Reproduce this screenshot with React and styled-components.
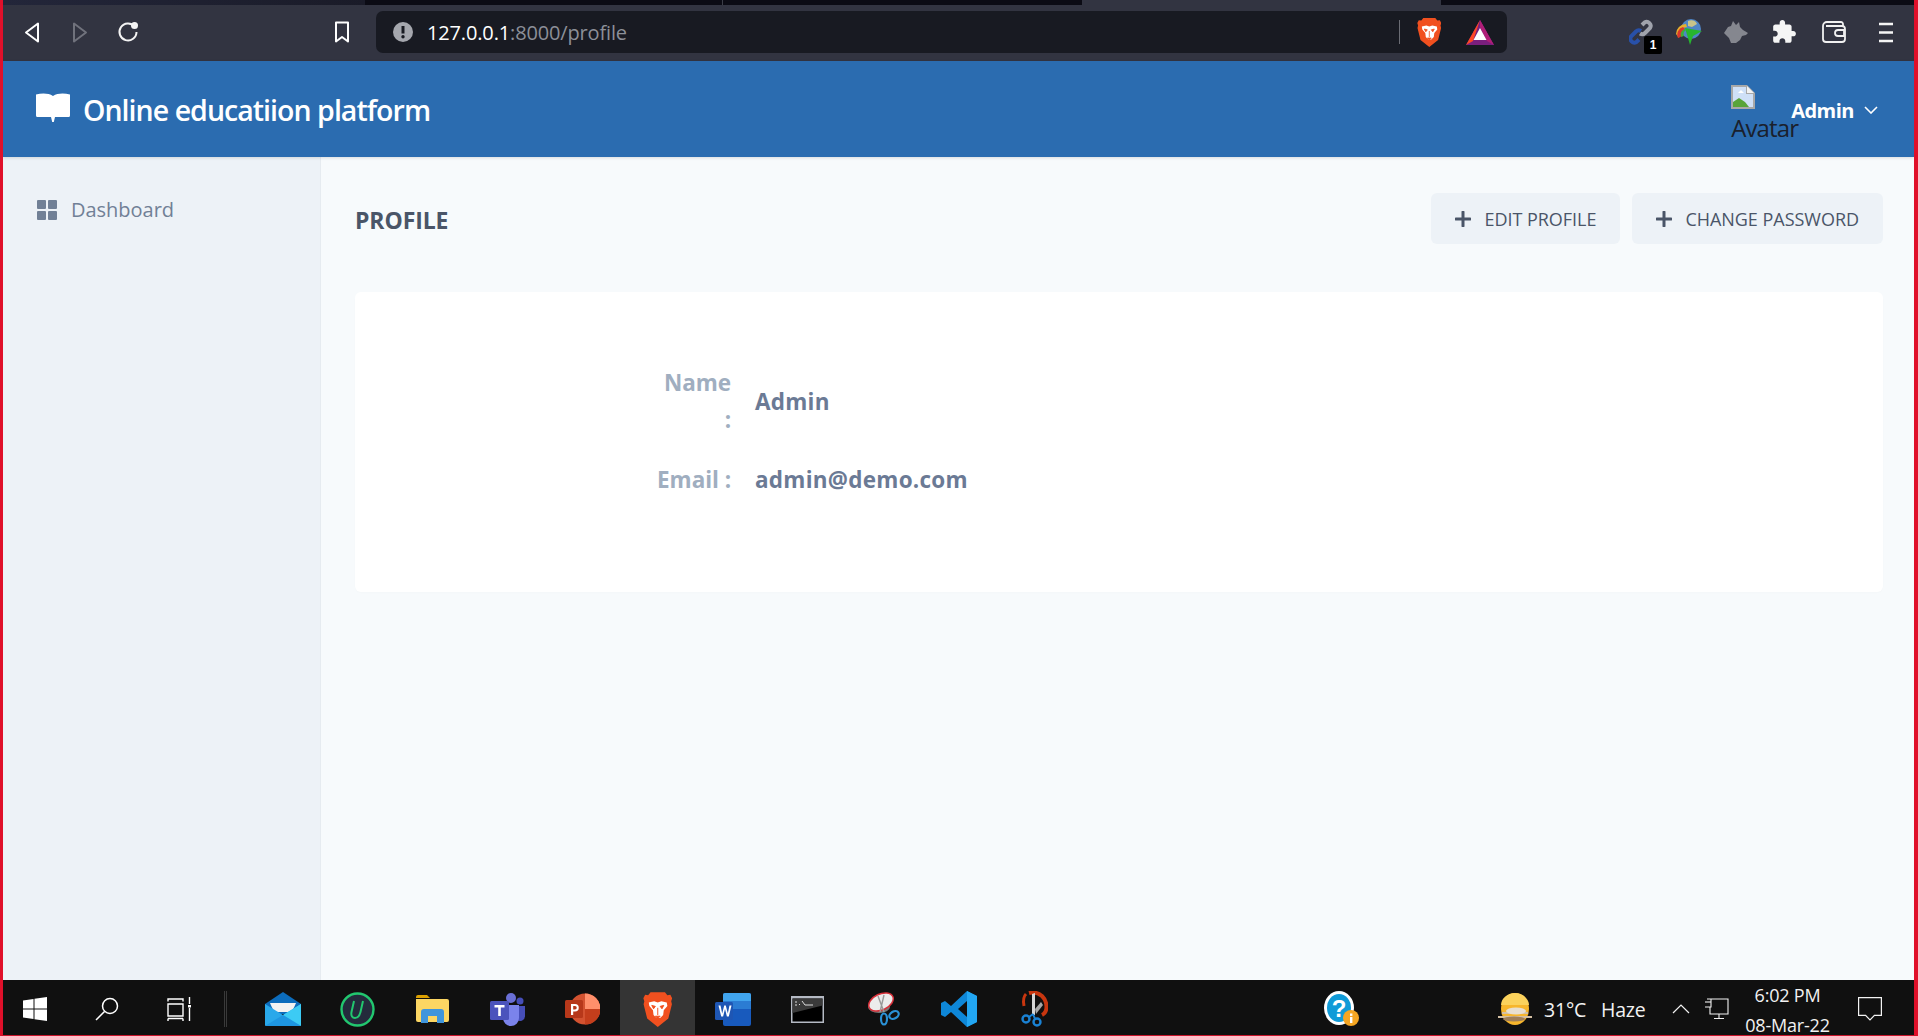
import React from "react";
import styled, { createGlobalStyle } from "styled-components";

const Global = createGlobalStyle`
  html, body { margin: 0; padding: 0; height: 100%; overflow: hidden; }
  * { box-sizing: border-box; }
  #root { height: 1036px; }
`;

const sans = `"Open Sans", "Noto Sans", sans-serif`;

const Frame = styled.div`
  height: 1036px; display: flex; flex-direction: column;
  border-left: 3px solid #e0102a; border-right: 4px solid #e0102a; border-bottom: 1px solid #c8142a;
  font-family: ${sans}; background: #f7fafc; overflow: hidden;
`;
const TabStrip = styled.div`height: 5px; display: flex; flex: none; background: #0b0b14;`;
const Tab = styled.div`
  width: ${p => p.$w}px; height: 5px; flex: none;
  background: ${p => p.$bg};
  border-right: ${p => (p.$edge ? "1px solid #3c3e48" : "none")};
`;
const Toolbar = styled.div`
  height: 56px; flex: none; background: #323441; display: flex; align-items: center; padding: 0 4px 2px 5px;
`;
const ToolSlot = styled.div`
  width: ${p => p.$w || 48}px; margin-left: ${p => p.$ml || 0}px; flex: none; height: 42px;
  display: flex; align-items: center; justify-content: center; position: relative;
`;
const AddressBar = styled.div`
  width: 1131px; height: 42px; margin-left: 10px; background: #181a22; border-radius: 7px; flex: none;
  display: flex; align-items: center; padding-left: 17px;
`;
const Url = styled.div`
  margin-left: 14px; font-size: 20px; letter-spacing: -0.15px; color: #8c8f98; white-space: nowrap; width: 972px;
  b { color: #fff; font-weight: 400; }
`;
const UrlDivider = styled.div`width: 1px; height: 24px; background: #6a6c74; flex: none;`;
const ShieldSlot = styled.div`width: ${p => p.$w}px; flex: none; display: flex; justify-content: center;`;
const ExtSpacer = styled.div`flex: 1;`;
const Badge = styled.span`
  position: absolute; left: 27px; top: 25px; width: 18px; height: 18px; background: #000; color: #fff; border-radius: 2px;
  font: 700 12px/18px "Liberation Sans", sans-serif; text-align: center;
`;

const Header = styled.header`
  height: 96px; flex: none; background: #2b6cb0; display: flex; align-items: center; padding: 0 36px 0 33px;
  box-shadow: 0 1px 3px rgba(0,0,0,.12); position: relative; z-index: 1;
`;
const Brand = styled.div`
  display: flex; align-items: center; gap: 13px; color: #fff; font-size: 28.5px; font-weight: 600; letter-spacing: -.96px;
  padding-top: 2px;
`;
const BookIcon = styled.svg`margin-top: -4px;`;
const UserArea = styled.div`margin-left: auto; display: flex; align-items: flex-start; height: 96px;`;
const Avatar = styled.div`
  width: 60px; padding-top: 24px; font-size: 24px; line-height: 38px; color: #1a202c; font-weight: 400; letter-spacing: -.85px;
  white-space: nowrap;
  svg { display: block; }
`;
const UserName = styled.div`
  display: flex; align-items: center; gap: 10px; height: 96px; padding-top: 2px; color: #fff; font-size: 20px; font-weight: 700; letter-spacing: -.5px;
`;

const Body = styled.div`flex: 1; display: flex; min-height: 0;`;
const Sidebar = styled.aside`
  width: 318px; flex: none; background: #edf2f7; border-right: 1px solid #e6ebf0; padding: 40px 0 0 34px;
`;
const NavItem = styled.div`
  display: flex; align-items: center; gap: 14px; color: #718096; font-size: 20px; line-height: 26px; letter-spacing: -.02px; font-weight: 500;
`;
const Main = styled.main`flex: 1; padding: 36px 31px 0 34px; min-width: 0;`;
const PageHead = styled.div`display: flex; align-items: center; justify-content: space-between; height: 51px;`;
const PageTitle = styled.h1`
  margin: 3px 0 0 0; font-size: 23px; font-weight: 700; color: #4a5568; letter-spacing: -.1px; text-transform: uppercase;
`;
const Actions = styled.div`display: flex; gap: 12px;`;
const ActionButton = styled.button`
  height: 51px; padding: 0 24px; background: #edf2f7; border: 0; border-radius: 6px;
  display: flex; align-items: center; gap: 13px; color: #4a5568;
  font-family: ${sans}; font-size: 18px; font-weight: 500; letter-spacing: -.03px; text-transform: uppercase;
`;
const Card = styled.section`
  margin-top: 48px; height: 300px; background: #fff; border-radius: 6px; padding-top: 72px;
  box-shadow: 0 1px 2px rgba(0,0,0,.015);
`;
const InfoRow = styled.div`
  display: grid; grid-template-columns: 376px 1fr; column-gap: 24px; align-items: center; margin-bottom: 23px;
`;
const InfoLabel = styled.div`
  text-align: right; color: #a0aec0; font-size: 22.5px; font-weight: 700; line-height: 37px; letter-spacing: -.05px;
`;
const InfoValue = styled.div`
  color: #6b7a95; font-size: 22.5px; font-weight: 700; line-height: 37px; letter-spacing: .25px;
`;

const Taskbar = styled.footer`
  height: 55px; flex: none; background: #101010; display: flex; align-items: center; color: #f2f2f2;
`;
const TaskSlot = styled.div`
  width: ${p => p.$w || 75}px; margin-left: ${p => p.$ml || 0}px; height: 55px; flex: none; padding-top: 3px;
  display: flex; align-items: center; justify-content: center;
  background: ${p => (p.$active ? "#343434" : "transparent")};
`;
const TaskDivider = styled.div`
  width: 3px; height: 36px; flex: none; margin: 3px 0 0 10px; border-left: 1px solid #3a3a3a; border-right: 1px solid #3a3a3a;
`;
const Weather = styled.div`
  margin: 3px 0 0 131px; display: flex; align-items: center; font-size: 19.5px; letter-spacing: -.2px; white-space: nowrap; flex: none;
`;
const WeatherText = styled.span`margin-left: 12px; word-spacing: 10px;`;
const Clock = styled.div`
  width: 104px; flex: none; margin: 5px 0 0 6px; text-align: center; font-size: 18px; line-height: 30px; letter-spacing: -.2px;
`;

/* ---- drawings ---- */
const BraveLion = ({ size = 30 }) => (
  <svg width={size * 0.82} height={size} viewBox="0 0 24 30">
    <path d="M6 1h12l2 2.500 2.500-.3L24 6l-.8 2.500.6 2.500-3 12L12 30 3.200 23 .2 11 .8 8.500 0 6l1.500-2.800L4 3.500z" fill="#f1501f" />
    <path d="M4.500 9.500 9 8.500l3 1 3-1 4.500 1 .5 3-3 3.500-.5 4-2.500 2.500h-3L8.500 20 8 16l-3-3.500z" fill="#fff" />
    <path d="M7 12l3 .8-1.500 2zM17 12l-3 .8 1.500 2zM12 14v6M10 21h4l-2 2z" fill="#f1501f" stroke="#f1501f" strokeWidth=".8" />
  </svg>
);
const Chevron = ({ w = 14, h = 8, color = "#fff", sw = 1.6, up = false }) => (
  <svg width={w} height={h} viewBox={`0 0 ${w} ${h}`}>
    <path d={up ? `M1 ${h - 1}L${w / 2} 1L${w - 1} ${h - 1}` : `M1 1L${w / 2} ${h - 1}L${w - 1} 1`} fill="none" stroke={color} strokeWidth={sw} />
  </svg>
);
const Plus = () => (
  <svg width="16" height="16" viewBox="0 0 16 16"><path d="M8 1v14M1 8h14" stroke="#4a5568" strokeWidth="3" strokeLinecap="round" /></svg>
);

export default function App() {
  return (
    <Frame>
      <Global />
      <TabStrip>
        <Tab $w={362} $bg="linear-gradient(90deg,#23263a,#1a1b28)" />
        <Tab $w={358} $bg="#0b0b14" $edge />
        <Tab $w={359} $bg="#0b0b14" />
        <Tab $w={359} $bg="#323441" />
      </TabStrip>
      <Toolbar>
        <ToolSlot>
          <svg width="16" height="21" viewBox="0 0 16 21"><path d="M14 1.500v18L2 10.500z" fill="none" stroke="#fff" strokeWidth="2" strokeLinejoin="round" /></svg>
        </ToolSlot>
        <ToolSlot>
          <svg width="16" height="21" viewBox="0 0 16 21"><path d="M2 1.500v18l12-9z" fill="none" stroke="#70727c" strokeWidth="2" strokeLinejoin="round" /></svg>
        </ToolSlot>
        <ToolSlot>
          <svg width="22" height="22" viewBox="0 0 22 22"><path d="M17.500 5.500A8.500 8.500 0 1 0 19.500 11" fill="none" stroke="#f4f4f4" strokeWidth="2" /><circle cx="17.500" cy="4.500" r="3.500" fill="#f4f4f4" /></svg>
        </ToolSlot>
        <ToolSlot $ml={166}>
          <svg width="16" height="22" viewBox="0 0 16 22"><path d="M2 1.500h12v19l-6-4.500-6 4.500z" fill="none" stroke="#fff" strokeWidth="2" strokeLinejoin="round" /></svg>
        </ToolSlot>
        <AddressBar>
          <svg width="20" height="20" viewBox="0 0 20 20"><circle cx="10" cy="10" r="10" fill="#a5a7ae" /><path d="M10 4v7.500" stroke="#181a22" strokeWidth="3" /><circle cx="10" cy="14.800" r="1.700" fill="#181a22" /></svg>
          <Url><b>127.0.0.1</b>:8000/profile</Url>
          <UrlDivider />
          <ShieldSlot $w={58}><BraveLion size={30} /></ShieldSlot>
          <ShieldSlot $w={44}>
            <svg width="28" height="25" viewBox="0 0 28 25">
              <path d="M14 0 0 25h28z" fill="#7a1f7e" />
              <path d="M14 0 0 25l7-4z" fill="#ff4724" />
              <path d="M14 0v7l7 14 7 4z" fill="#b01e78" />
              <path d="M14 8 7.500 20h13z" fill="#fff" />
            </svg>
          </ShieldSlot>
        </AddressBar>
        <ExtSpacer />
        <ToolSlot $w={48}>
          <svg width="24" height="26" viewBox="0 0 24 26">
            <path d="M10 20.500l-2.500 2.500a4 4 0 0 1-5.500-5.500l5-5a4 4 0 0 1 5-.5" fill="none" stroke="#2850a8" strokeWidth="4" />
            <path d="M13 6l2.500-2.500a4 4 0 0 1 5.500 5.500l-5 5a4 4 0 0 1-5 .5" fill="none" stroke="#a0a3ac" strokeWidth="4" />
          </svg>
          <Badge>1</Badge>
        </ToolSlot>
        <ToolSlot $w={47}>
          <svg width="26" height="27" viewBox="0 0 26 27">
            <circle cx="15" cy="10" r="10" fill="#4f86c6" />
            <path d="M12 2c4-2 8 0 9 3l-5 3-4-1z" fill="#c9c48a" />
            <path d="M0 15a10 10 0 0 1 10-10l1 3a7 7 0 0 0-7 7l-1 4z" fill="#e6b02c" />
            <path d="M2 19a8 8 0 0 1 5-11l2 2a6 6 0 0 0-3 7z" fill="#d9372b" />
            <path d="M5 18a6 6 0 0 1 4-8l1 1a5 5 0 0 0-2 6z" fill="#3fae3a" />
            <path d="M9 9l17 3-9 5-3 9-2-7z" fill="#27b52f" />
          </svg>
        </ToolSlot>
        <ToolSlot $w={48}>
          <svg width="24" height="22" viewBox="0 0 24 22"><path d="M0 12 4 6l3-1 2-5 3 4 3-3 1 5 3 3 5 3-2 2-4 1-2 4-4 3H7l-2-5z" fill="#85878f" /></svg>
        </ToolSlot>
        <ToolSlot $w={47}>
          <svg width="26" height="26" viewBox="0 0 24 24"><path fill="#f5f5f5" d="M20.500 11H19V7c0-1.100-.9-2-2-2h-4V3.500C13 2.120 11.880 1 10.500 1S8 2.120 8 3.500V5H4c-1.100 0-1.990.9-1.990 2v3.800H3.500c1.490 0 2.700 1.210 2.700 2.700s-1.210 2.700-2.700 2.700H2V20c0 1.100.9 2 2 2h3.800v-1.500c0-1.490 1.210-2.700 2.700-2.700 1.490 0 2.700 1.210 2.700 2.700V22H17c1.100 0 2-.9 2-2v-4h1.500c1.380 0 2.500-1.120 2.500-2.500S21.880 11 20.500 11z" /></svg>
        </ToolSlot>
        <ToolSlot $w={54}>
          <svg width="24" height="22" viewBox="0 0 24 22">
            <path d="M21 5V3a2 2 0 0 0-2-2H5a4 4 0 0 0-4 4v13a3 3 0 0 0 3 3h16a3 3 0 0 0 3-3V8a3 3 0 0 0-3-3H4" fill="none" stroke="#f0f0f0" strokeWidth="1.800" />
            <path d="M22 9h-6a2.500 2.500 0 0 0 0 6h6z" fill="#323441" stroke="#f0f0f0" strokeWidth="1.800" />
          </svg>
        </ToolSlot>
        <ToolSlot $w={49}>
          <svg width="14" height="21" viewBox="0 0 14 21"><path d="M0 2h14M0 10.500h14M0 19h14" stroke="#f5f5f5" strokeWidth="2.400" /></svg>
        </ToolSlot>
      </Toolbar>
      <Header>
        <Brand>
          <BookIcon width="34" height="30" viewBox="0 0 34 30">
            <path d="M0 1.500C6 0 12.500 0 17 3c4.500-3 11-3 17-1.500v21a1.500 1.500 0 0 1-1.500 1.500H19l-1.200 5h-1.600L15 24H1.500A1.500 1.500 0 0 1 0 22.500z" fill="#fff" />
          </BookIcon>
          Online educatiion platform
        </Brand>
        <UserArea>
          <Avatar>
            <svg width="24" height="24" viewBox="0 0 24 24">
              <path d="M0 0h16l8 8v16H0z" fill="#a8a8a8" />
              <path d="M2 2h13v7h7v13H2z" fill="#cfe0f7" />
              <path d="M2 22v-5l6-4 6 4 4 5z" fill="#58a43a" />
              <path d="M16 1v7h7z" fill="#f2f2f2" />
              <path d="M7 8l3-3 3 3z" fill="#fff" />
            </svg>
            Avatar
          </Avatar>
          <UserName>
            Admin
            <Chevron w={14} h={8} />
          </UserName>
        </UserArea>
      </Header>
      <Body>
        <Sidebar>
          <NavItem>
            <svg width="20" height="20" viewBox="0 0 20 20">
              <path d="M1 0h7a1 1 0 0 1 1 1v7a1 1 0 0 1-1 1H1a1 1 0 0 1-1-1V1a1 1 0 0 1 1-1zM12 0h7a1 1 0 0 1 1 1v7a1 1 0 0 1-1 1h-7a1 1 0 0 1-1-1V1a1 1 0 0 1 1-1zM1 11h7a1 1 0 0 1 1 1v7a1 1 0 0 1-1 1H1a1 1 0 0 1-1-1v-7a1 1 0 0 1 1-1zM12 11h7a1 1 0 0 1 1 1v7a1 1 0 0 1-1 1h-7a1 1 0 0 1-1-1v-7a1 1 0 0 1 1-1z" fill="#718096" />
            </svg>
            Dashboard
          </NavItem>
        </Sidebar>
        <Main>
          <PageHead>
            <PageTitle>Profile</PageTitle>
            <Actions>
              <ActionButton><Plus />Edit Profile</ActionButton>
              <ActionButton><Plus />Change Password</ActionButton>
            </Actions>
          </PageHead>
          <Card>
            <InfoRow>
              <InfoLabel>Name<br />:</InfoLabel>
              <InfoValue>Admin</InfoValue>
            </InfoRow>
            <InfoRow>
              <InfoLabel>Email :</InfoLabel>
              <InfoValue>admin@demo.com</InfoValue>
            </InfoRow>
          </Card>
        </Main>
      </Body>
      <Taskbar>
        <TaskSlot $w={64}>
          <svg width="24" height="24" viewBox="0 0 24 24"><path d="M0 3.500l10.500-1.500v9.500H0zM11.500 1.800 24 0v11.500H11.500zM0 12.500h10.500V22L0 20.500zM11.500 12.500H24V24l-12.500-1.800z" fill="#fff" /></svg>
        </TaskSlot>
        <TaskSlot $w={72} $ml={4}>
          <svg width="24" height="24" viewBox="0 0 24 24"><circle cx="15" cy="9" r="7.500" fill="none" stroke="#fff" strokeWidth="1.500" /><path d="M9.500 14.500 1 23" stroke="#fff" strokeWidth="1.500" /></svg>
        </TaskSlot>
        <TaskSlot $w={71}>
          <svg width="24" height="24" viewBox="0 0 24 24" fill="none" stroke="#fff" strokeWidth="1.400"><path d="M1 4.500V2h15v2.500M1 21.500V24M16 21.500V24M1 21.500h15M1 7h15v12H1z" /><path d="M22.500 0v7M22.500 11v13" /><rect x="21" y="8" width="3" height="2.500" fill="#fff" stroke="none" /></svg>
        </TaskSlot>
        <TaskDivider />
        <TaskSlot $ml={18}>
          <svg width="36" height="34" viewBox="0 0 36 34">
            <path d="M18 0 36 12v10H0V12z" fill="#0c6cbc" />
            <path d="M5 11h26l-4 9H9z" fill="#f2f2f2" />
            <path d="M0 12l18 11 18-11v21a1 1 0 0 1-1 1H1a1 1 0 0 1-1-1z" fill="#29a8ea" />
            <path d="M36 12v22L18 23z" fill="#3ccbf4" />
            <path d="M18 23 36 34H0z" fill="#1a8fdd" opacity=".7" />
          </svg>
        </TaskSlot>
        <TaskSlot>
          <svg width="35" height="35" viewBox="0 0 35 35">
            <circle cx="17.500" cy="17.500" r="16" fill="#242b3c" stroke="#22c76f" strokeWidth="2.400" />
            <path d="M14 9l-2.500 11c-.8 4 1 6 3.500 6s4.500-2 5.500-6L23 9" fill="none" stroke="#22c76f" strokeWidth="2" />
          </svg>
        </TaskSlot>
        <TaskSlot>
          <svg width="33" height="28" viewBox="0 0 33 28">
            <path d="M0 2a2 2 0 0 1 2-2h9l3 3h-14z" fill="#dca000" />
            <path d="M0 4h31a2 2 0 0 1 2 2v19a2 2 0 0 1-2 2H2a2 2 0 0 1-2-2z" fill="#fcd663" />
            <path d="M5 28V17a3 3 0 0 1 3-3h17a3 3 0 0 1 3 3v11h-7v-7h-9v7z" fill="#3f95dc" />
          </svg>
        </TaskSlot>
        <TaskSlot>
          <svg width="36" height="33" viewBox="0 0 36 33">
            <circle cx="21" cy="5" r="5" fill="#6a6fd6" />
            <circle cx="30" cy="8" r="3.500" fill="#464eb8" />
            <path d="M25 13h10v10a5 5 0 0 1-8 4z" fill="#464eb8" />
            <path d="M11 12h18v13a8 8 0 0 1-16 0z" fill="#7b83eb" />
            <rect y="8" width="19" height="19" rx="1.500" fill="#4b53bc" />
            <path d="M4.500 12h10v2.400h-3.700V23H8.200v-8.600H4.500z" fill="#fff" />
          </svg>
        </TaskSlot>
        <TaskSlot>
          <svg width="35" height="32" viewBox="0 0 35 32">
            <circle cx="20" cy="16" r="15.500" fill="#d35230" />
            <path d="M20 .5A15.500 15.500 0 0 1 35.500 16H20z" fill="#ff8f6b" />
            <path d="M20 16h15.500A15.500 15.500 0 0 1 20 31.500z" fill="#c43e1c" />
            <rect y="7" width="18" height="18" rx="1.500" fill="#b7381a" />
            <path d="M6 11h4a3.500 3.500 0 0 1 0 7.500H8.200V22H6zM8.200 13v3.500H10a1.700 1.700 0 0 0 0-3.500z" fill="#fff" />
          </svg>
        </TaskSlot>
        <TaskSlot $active><BraveLion size={36} /></TaskSlot>
        <TaskSlot $w={75}>
          <svg width="36" height="33" viewBox="0 0 36 33">
            <rect x="8" width="28" height="33" rx="2" fill="#185abd" />
            <path d="M8 2a2 2 0 0 1 2-2h24a2 2 0 0 1 2 2v6H8z" fill="#41a5ee" />
            <rect x="8" y="8" width="28" height="8" fill="#2b7cd3" />
            <rect y="9" width="18" height="18" rx="1.500" fill="#1e56b4" />
            <path d="M3.500 12.500h2l1.700 8 2-8h1.600l2 8 1.700-8h2l-2.700 11h-1.900l-1.900-7.500-1.900 7.500H6.200z" fill="#fff" />
          </svg>
        </TaskSlot>
        <TaskSlot $w={75}>
          <svg width="33" height="27" viewBox="0 0 33 27">
            <rect width="33" height="27" fill="#b5bac4" />
            <rect x="1.500" y="2.500" width="30" height="23" fill="#000" />
            <path d="M1.500 2.500h30v7L1.500 17z" fill="#3a3a3a" />
            <path d="M4 6h2M4 9h2M8 8.500h1M11 5l3 4M14 9h8" stroke="#ddd" strokeWidth="1" />
          </svg>
        </TaskSlot>
        <TaskSlot $w={77}>
          <svg width="33" height="34" viewBox="0 0 33 34">
            <ellipse cx="12" cy="15" rx="11" ry="6" fill="#777" />
            <ellipse cx="14" cy="10" rx="13" ry="8" transform="rotate(-25 14 10)" fill="#ececec" stroke="#d9303a" strokeWidth="1.500" />
            <path d="M11 4l6 16M17 3l-4 17" stroke="#999" strokeWidth="1.400" />
            <ellipse cx="17" cy="27" rx="3" ry="5.500" fill="none" stroke="#2a91d6" strokeWidth="2.200" />
            <ellipse cx="27" cy="23" rx="5" ry="3.500" fill="none" stroke="#2a91d6" strokeWidth="2.200" transform="rotate(-30 27 23)" />
          </svg>
        </TaskSlot>
        <TaskSlot $w={74}>
          <svg width="36" height="36" viewBox="0 0 36 36">
            <path d="M26 0l10 5v26l-10 5L10 21l-6 5-4-2V12l4-2 6 5z" fill="#0e87d8" />
            <path d="M26 0l10 5v26l-10 5z" fill="#22a6f2" />
            <path d="M26 10v16l-9-8z" fill="#101010" />
          </svg>
        </TaskSlot>
        <TaskSlot>
          <svg width="28" height="36" viewBox="0 0 28 36">
            <path d="M9 2a15 15 0 0 1 13 3c6 6 6 16 0 19" fill="none" stroke="#c8360f" strokeWidth="4" />
            <path d="M6 3c-3 3-3 7-2 12" fill="none" stroke="#c8360f" strokeWidth="3" />
            <path d="M12 3l3-1v22h-3z" fill="#d6d6d6" />
            <path d="M15 18l6-7 2 3-7 9z" fill="#a8a8a8" />
            <circle cx="6" cy="28" r="3.500" fill="none" stroke="#1a82d4" strokeWidth="2.400" />
            <circle cx="17" cy="31" r="3.500" fill="none" stroke="#1a82d4" strokeWidth="2.400" />
            <path d="M9 26l4-3M15 28l-2-5" stroke="#1a82d4" strokeWidth="2" />
          </svg>
        </TaskSlot>
        <TaskSlot $ml={246} $w={50}>
          <svg width="36" height="36" viewBox="0 0 36 36">
            <ellipse cx="15" cy="17" rx="15" ry="17" fill="#fff" />
            <ellipse cx="15" cy="17" rx="12" ry="14" fill="#109bd8" />
            <text x="15" y="26" textAnchor="middle" fontFamily="Liberation Sans, sans-serif" fontWeight="700" fontSize="24" fill="#fff">?</text>
            <circle cx="27" cy="27" r="8" fill="#f5a623" />
            <rect x="26" y="26" width="2.400" height="6" fill="#fff" />
            <rect x="26" y="22.500" width="2.400" height="2.400" fill="#fff" />
          </svg>
        </TaskSlot>
        <Weather>
          <svg width="34" height="32" viewBox="0 0 34 32">
            <ellipse cx="17" cy="16" rx="14" ry="16" fill="#f7b62c" />
            <path d="M17 0c8 0 14 6 14 12H3C3 6 9 0 17 0z" fill="#fbd25c" />
            <path d="M4 20h26M0 24h34" stroke="#d5c0a3" strokeWidth="2" />
            <ellipse cx="18" cy="18" rx="10" ry="3.500" fill="#e8dfd0" />
            <ellipse cx="16" cy="26" rx="11" ry="2.500" fill="#a07f58" />
          </svg>
          <WeatherText>31°C Haze</WeatherText>
        </Weather>
        <TaskSlot $w={18} $ml={26}><Chevron w={18} h={10} color="#f2f2f2" sw={1.2} up /></TaskSlot>
        <TaskSlot $w={26} $ml={14}>
          <svg width="24" height="22" viewBox="0 0 24 22" fill="none" stroke="#f2f2f2" strokeWidth="1.100">
            <path d="M6 1h17v15H6M2 1h4v8H0M5 9v7h1M14 16v4M9 20.500h10" />
            <path d="M0 4h6" />
          </svg>
        </TaskSlot>
        <Clock>6:02 PM<br />08-Mar-22</Clock>
        <TaskSlot $w={26} $ml={17}>
          <svg width="24" height="24" viewBox="0 0 24 24" fill="none" stroke="#f2f2f2" strokeWidth="1.200"><path d="M.6.600h22.800v17.800h-7L12 23l-4.400-4.600h-7z" /></svg>
        </TaskSlot>
      </Taskbar>
    </Frame>
  );
}
